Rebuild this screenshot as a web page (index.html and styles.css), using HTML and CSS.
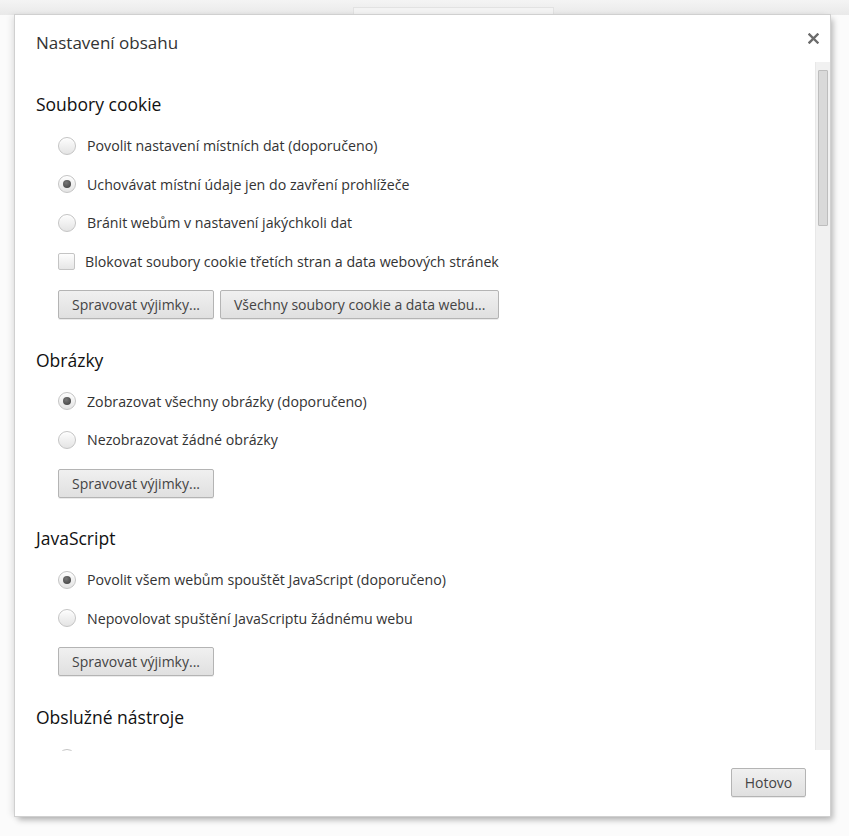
FILE: index.html
```html
<!DOCTYPE html>
<html lang="cs">
<head>
    <meta charset="UTF-8">
    <meta name="viewport" content="width=device-width, initial-scale=1.0">
    <title>Nastavení obsahu</title>
    <link rel="stylesheet" href="styles.css">
</head>
<body>

<div class="backdrop">
    <div class="top-strip"><div class="top-tab"></div></div>
</div>

<div class="overlay">
    <div class="dialog">
        <div class="dialog-header">
            <h1>Nastavení obsahu</h1>
            <button class="close" title="Zavřít">
                <svg width="11" height="11" viewBox="0 0 11 11">
                    <path d="M1.5 1.5 L9.5 9.5 M9.5 1.5 L1.5 9.5" stroke="#6b6b6b" stroke-width="2.4" stroke-linecap="square"/>
                </svg>
            </button>
        </div>

        <div class="dialog-body">
            <div class="scroll-content">
                <!-- Cookies -->
                <section class="section">
                    <h3>Soubory cookie</h3>
                    <div class="options">
                        <label class="row"><span class="radio"></span>Povolit nastavení místních dat (doporučeno)</label>
                        <label class="row"><span class="radio checked"></span>Uchovávat místní údaje jen do zavření prohlížeče</label>
                        <label class="row"><span class="radio"></span>Bránit webům v nastavení jakýchkoli dat</label>
                        <label class="row"><span class="checkbox"></span>Blokovat soubory cookie třetích stran a data webových stránek</label>
                    </div>
                    <div class="buttons">
                        <button class="btn">Spravovat výjimky...</button>
                        <button class="btn">Všechny soubory cookie a data webu...</button>
                    </div>
                </section>

                <!-- Images -->
                <section class="section">
                    <h3>Obrázky</h3>
                    <div class="options">
                        <label class="row"><span class="radio checked"></span>Zobrazovat všechny obrázky (doporučeno)</label>
                        <label class="row"><span class="radio"></span>Nezobrazovat žádné obrázky</label>
                    </div>
                    <div class="buttons">
                        <button class="btn">Spravovat výjimky...</button>
                    </div>
                </section>

                <!-- JavaScript -->
                <section class="section">
                    <h3>JavaScript</h3>
                    <div class="options">
                        <label class="row"><span class="radio checked"></span>Povolit všem webům spouštět JavaScript (doporučeno)</label>
                        <label class="row"><span class="radio"></span>Nepovolovat spuštění JavaScriptu žádnému webu</label>
                    </div>
                    <div class="buttons">
                        <button class="btn">Spravovat výjimky...</button>
                    </div>
                </section>

                <!-- Handlers: only the top of the first radio is visible -->
                <section class="section">
                    <h3>Obslužné nástroje</h3>
                    <div class="options">
                        <span class="row"><span class="radio checked"></span></span>
                    </div>
                </section>
            </div>
            <div class="scrollbar">
                <div class="thumb"></div>
            </div>
        </div>

        <div class="dialog-footer">
            <button class="btn">Hotovo</button>
        </div>
    </div>
</div>

</body>
</html>
```

FILE: styles.css
```css
html, body {
    margin: 0;
    padding: 0;
}
body {
    width: 849px;
    height: 836px;
    overflow: hidden;
    background-color: #fbfbfb;
    font-family: "Open Sans", "Noto Sans", Arial, sans-serif;
    position: relative;
}
.backdrop {
    height: 15px;
}
.top-strip {
    height: 15px;
    background: linear-gradient(#f4f4f4, #e9e9e9);
    display: flex;
    padding-left: 353px;
}
.top-tab {
    width: 199px;
    height: 8px;
    margin-top: 7px;
    border: 1px solid #e2e2e2;
    border-bottom: none;
    background-color: #f3f3f3;
}
.overlay {
    position: absolute;
    top: 15px;
    left: 15px;
}
.dialog {
    width: 815px;
    height: 801px;
    background-color: #fff;
    display: flex;
    flex-direction: column;
    box-shadow: 0 0 0 1px #d0d0d0, 3px 4px 6px rgba(0, 0, 0, 0.28), -4px 0 6px rgba(0, 0, 0, 0.08);
}
.dialog-header {
    height: 47px;
    box-sizing: border-box;
    padding: 16px 0 0 21px;
    display: flex;
    justify-content: space-between;
    align-items: flex-start;
}
.dialog-header h1 {
    margin: 0;
    font-size: 17px;
    font-weight: normal;
    line-height: 24px;
    color: #333;
}
.close {
    border: none;
    background: none;
    padding: 0;
    margin: 2px 11px 0 0;
    width: 11px;
    height: 11px;
    display: flex;
}
.dialog-body {
    height: 689px;
    display: flex;
}
.scroll-content {
    flex: 1;
    overflow: hidden;
    padding: 30px 0 0 21px;
}
.scrollbar {
    width: 15px;
    height: 688px;
    background-color: #f1f1f1;
    border-left: 1px solid #e8e8e8;
    box-sizing: border-box;
    padding: 8px 0 0 2px;
}
.thumb {
    width: 10px;
    height: 156px;
    box-sizing: border-box;
    background-color: #d9d9d9;
    border: 1px solid #bdbdbd;
    border-radius: 1px;
}
.section {
    margin-bottom: 28.5px;
}
.section h3 {
    margin: 0;
    font-size: 17.5px;
    font-weight: normal;
    line-height: 24px;
    color: #111;
}
.options {
    padding: 10.25px 0 0 22px;
}
.row {
    height: 38.5px;
    display: flex;
    align-items: center;
    font-size: 14.2px;
    color: #333;
}
.radio {
    width: 18px;
    height: 18px;
    box-sizing: border-box;
    border-radius: 50%;
    border: 1px solid #c4c4c4;
    background: linear-gradient(#fdfdfd, #e4e4e4);
    box-shadow: inset 0 1px 1px rgba(255, 255, 255, 0.9);
    margin-right: 11px;
    display: flex;
    align-items: center;
    justify-content: center;
    flex-shrink: 0;
}
.radio.checked::after {
    content: "";
    width: 8px;
    height: 8px;
    border-radius: 50%;
    background: radial-gradient(circle at 40% 35%, #777, #3a3a3a);
}
.checkbox {
    width: 17px;
    height: 17px;
    box-sizing: border-box;
    border-radius: 2px;
    border: 1px solid #c4c4c4;
    background: linear-gradient(#fdfdfd, #e6e6e6);
    margin-right: 10px;
    flex-shrink: 0;
}
.buttons {
    display: flex;
    gap: 6px;
    padding: 9.75px 0 0 22px;
}
.btn {
    height: 29px;
    box-sizing: border-box;
    padding: 0 13px;
    border: 1px solid #b4b4b4;
    border-radius: 2px;
    background: linear-gradient(#f0f0f0, #e0e0e0);
    box-shadow: 0 1px 0 rgba(0, 0, 0, 0.08);
    font-family: "Open Sans", "Noto Sans", Arial, sans-serif;
    font-size: 14px;
    color: #444;
}
.dialog-footer {
    flex: 1;
    display: flex;
    justify-content: flex-end;
    align-items: flex-start;
    padding: 17px 24px 0 0;
}
.dialog-footer .btn {
    width: 75px;
    padding: 0;
}
```
